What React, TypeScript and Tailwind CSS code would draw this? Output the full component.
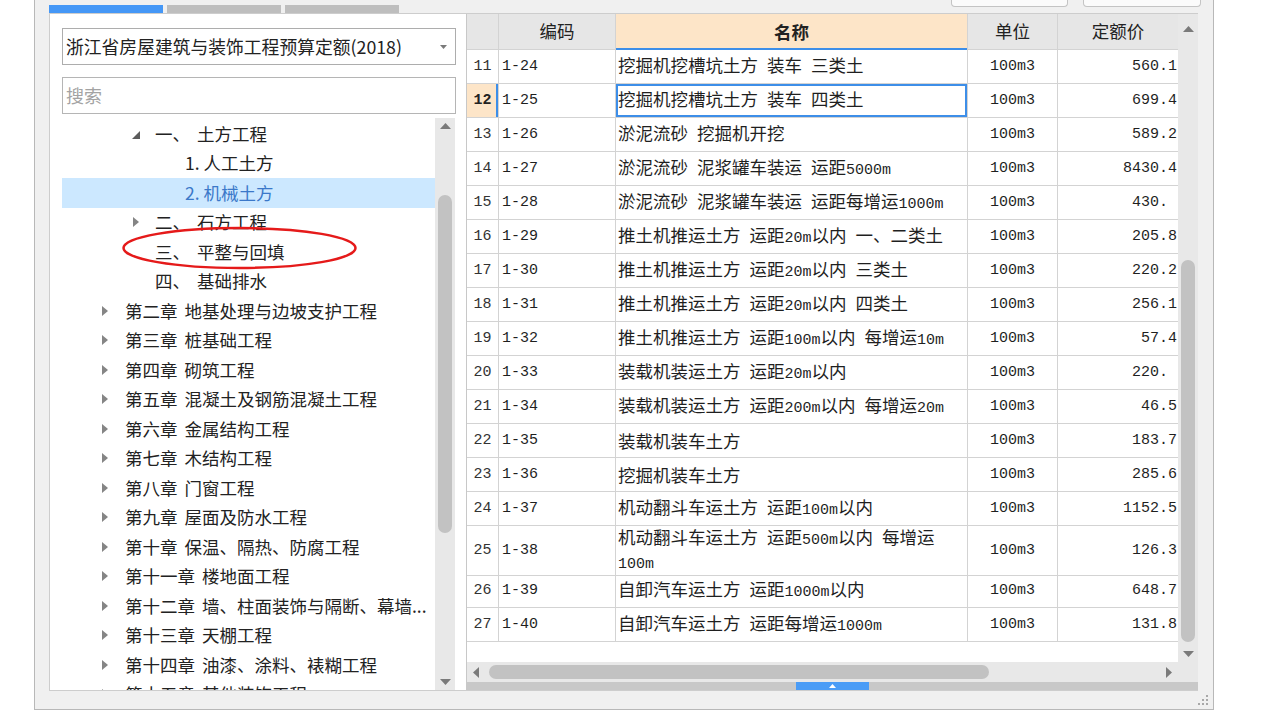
type Row = {
  n: number;
  code: string;
  name: string[];
  price: string;
  active?: boolean;
};

const rows: Row[] = [
  { n: 11, code: "1-24", name: ["挖掘机挖槽坑土方 装车 三类土"], price: "560.1" },
  { n: 12, code: "1-25", name: ["挖掘机挖槽坑土方 装车 四类土"], price: "699.4", active: true },
  { n: 13, code: "1-26", name: ["淤泥流砂 挖掘机开挖"], price: "589.2" },
  { n: 14, code: "1-27", name: ["淤泥流砂 泥浆罐车装运 运距5000m"], price: "8430.4" },
  { n: 15, code: "1-28", name: ["淤泥流砂 泥浆罐车装运 运距每增运1000m"], price: "430. " },
  { n: 16, code: "1-29", name: ["推土机推运土方 运距20m以内 一、二类土"], price: "205.8" },
  { n: 17, code: "1-30", name: ["推土机推运土方 运距20m以内 三类土"], price: "220.2" },
  { n: 18, code: "1-31", name: ["推土机推运土方 运距20m以内 四类土"], price: "256.1" },
  { n: 19, code: "1-32", name: ["推土机推运土方 运距100m以内 每增运10m"], price: "57.4" },
  { n: 20, code: "1-33", name: ["装载机装运土方 运距20m以内"], price: "220. " },
  { n: 21, code: "1-34", name: ["装载机装运土方 运距200m以内 每增运20m"], price: "46.5" },
  { n: 22, code: "1-35", name: ["装载机装车土方"], price: "183.7" },
  { n: 23, code: "1-36", name: ["挖掘机装车土方"], price: "285.6" },
  { n: 24, code: "1-37", name: ["机动翻斗车运土方 运距100m以内"], price: "1152.5" },
  { n: 25, code: "1-38", name: ["机动翻斗车运土方 运距500m以内 每增运", "100m"], price: "126.3" },
  { n: 26, code: "1-39", name: ["自卸汽车运土方 运距1000m以内"], price: "648.7" },
  { n: 27, code: "1-40", name: ["自卸汽车运土方 运距每增运1000m"], price: "131.8" },
];

type TreeNode = {
  level: 1 | 2 | 3;
  label: string;
  sub?: string;
  toggle?: "open" | "closed";
  selected?: boolean;
};

const chapters: [string, string][] = [
  ["第二章", "地基处理与边坡支护工程"],
  ["第三章", "桩基础工程"],
  ["第四章", "砌筑工程"],
  ["第五章", "混凝土及钢筋混凝土工程"],
  ["第六章", "金属结构工程"],
  ["第七章", "木结构工程"],
  ["第八章", "门窗工程"],
  ["第九章", "屋面及防水工程"],
  ["第十章", "保温、隔热、防腐工程"],
  ["第十一章", "楼地面工程"],
  ["第十二章", "墙、柱面装饰与隔断、幕墙..."],
  ["第十三章", "天棚工程"],
  ["第十四章", "油漆、涂料、裱糊工程"],
  ["第十五章", "其他装饰工程"],
];

const tree: TreeNode[] = [
  { level: 2, label: "一、", sub: "土方工程", toggle: "open" },
  { level: 3, label: "1. 人工土方" },
  { level: 3, label: "2. 机械土方", selected: true },
  { level: 2, label: "二、", sub: "石方工程", toggle: "closed" },
  { level: 2, label: "三、", sub: "平整与回填" },
  { level: 2, label: "四、", sub: "基础排水" },
  ...chapters.map(
    ([label, sub]): TreeNode => ({ level: 1, label, sub, toggle: "closed" }),
  ),
];

// ascii runs get the narrow mono face, the rest stays in the CJK face
function Mixed({ text }: { text: string }) {
  const parts = text.split(/([ -~]+)/).filter((p) => p !== "");
  return (
    <>
      {parts.map((part, i) =>
        /^[ -~]+$/.test(part) ? (
          <span
            key={i}
            className="whitespace-pre font-['Liberation_Mono',monospace] text-[15px]"
          >
            {part}
          </span>
        ) : (
          <span key={i}>{part}</span>
        ),
      )}
    </>
  );
}

function Arrow({ dir, color = "#7a7a7a" }: { dir: "up" | "down" | "left" | "right"; color?: string }) {
  if (dir === "up" || dir === "down") {
    return (
      <svg width="11" height="6" viewBox="0 0 11 6">
        <polygon
          points={dir === "up" ? "0,6 5.5,0 11,6" : "0,0 11,0 5.5,6"}
          fill={color}
        />
      </svg>
    );
  }
  return (
    <svg width="6" height="11" viewBox="0 0 6 11">
      <polygon points={dir === "left" ? "6,0 6,11 0,5.5" : "0,0 6,5.5 0,11"} fill={color} />
    </svg>
  );
}

function TreeRow({ node }: { node: TreeNode }) {
  const indent =
    node.level === 1 ? "w-[40px]" : node.level === 2 ? "w-[70px]" : "w-[123px]";
  return (
    <div
      className={`flex h-[29.5px] shrink-0 items-center whitespace-nowrap text-[17.5px] ${
        node.selected ? "bg-[#cce8ff] text-[#3b78c9]" : "text-[#222]"
      }`}
    >
      <div className={`${indent} shrink-0`} />
      {node.level !== 3 && (
        <div className="flex w-[23px] shrink-0 items-center">
          {node.toggle === "open" && (
            <svg width="8" height="8" viewBox="0 0 8 8" className="mt-[3px]">
              <polygon points="8,0 8,8 0,8" fill="#5c5c5c" />
            </svg>
          )}
          {node.toggle === "closed" && (
            <span className={node.level === 2 ? "ml-[1px] flex" : "flex"}>
              <svg width="6" height="10" viewBox="0 0 6 10">
                <polygon points="0,0 6,5 0,10" fill="#858585" />
              </svg>
            </span>
          )}
        </div>
      )}
      <span>{node.label}</span>
      {node.sub && <span className="ml-[7px]">{node.sub}</span>}
    </div>
  );
}

const line = "border-[#d3d3d3]";
const mono = "font-['Liberation_Mono',monospace] text-[15px]";

export default function App() {
  return (
    <div className="relative flex h-[712px] w-[1282px] overflow-hidden bg-white font-['Noto_Sans_CJK_SC',sans-serif] text-[#1f1f1f]">
      <div className="w-[34px] shrink-0" />
      <div className="flex h-[710px] w-[1180px] shrink-0 flex-col border-x border-b border-[#b8b8b8] bg-[#f0f0f0]">
        {/* tab strip */}
        <div className="flex h-[13px] shrink-0 pl-[14px] pr-[12px]">
          <div className="flex gap-[4px] self-end">
            <div className="h-[8px] w-[114px] bg-[#4597f6]" />
            <div className="h-[8px] w-[114px] bg-[#bebebe]" />
            <div className="h-[8px] w-[114px] bg-[#bebebe]" />
          </div>
          <div className="ml-auto flex gap-[15px] self-start">
            <div className="h-[7px] w-[117px] rounded-b-[4px] border-x border-b border-[#c4c4c4] bg-[#fbfbfb]" />
            <div className="h-[7px] w-[118px] rounded-b-[4px] border-x border-b border-[#c4c4c4] bg-[#fbfbfb]" />
          </div>
        </div>

        {/* content */}
        <div className="ml-[14px] flex h-[678px] w-[1149px] shrink-0 border-y border-l border-[#cdcdcd] bg-white">
          {/* left: tree */}
          <div className="flex w-[406px] shrink-0 flex-col pl-[12px]">
            <div className="mt-[14px] flex h-[37px] w-[394px] items-center justify-between border border-[#adadad] pl-[3px] pr-[8px]">
              <span className="whitespace-nowrap text-[17.8px] text-[#222]">
                浙江省房屋建筑与装饰工程预算定额(2018)
              </span>
              <svg width="7" height="4" viewBox="0 0 7 4">
                <polygon points="0,0 7,0 3.5,4" fill="#7a7a7a" />
              </svg>
            </div>
            <div className="mt-[12px] flex h-[37px] w-[394px] items-center border border-[#b5b5b5] pl-[3px]">
              <span className="text-[18px] text-[#a3a3a3]">搜索</span>
            </div>
            <div className="mt-[4px] flex min-h-0 flex-1">
              <div className="flex w-[373px] flex-col overflow-hidden pt-[1px]">
                {tree.map((node, i) => (
                  <TreeRow key={i} node={node} />
                ))}
              </div>
              <div className="flex w-[20px] flex-col items-center bg-[#e8e8e8]">
                <div className="flex h-[16px] items-center">
                  <Arrow dir="up" />
                </div>
                <div className="mt-[61px] h-[338px] w-[14px] rounded-full bg-[#c2c2c2]" />
                <div className="flex-1" />
                <div className="flex h-[16px] items-center">
                  <Arrow dir="down" />
                </div>
              </div>
            </div>
          </div>

          <div className="w-[10px] shrink-0" />

          {/* right: table */}
          <div className="flex w-[732px] shrink-0 flex-col border-l border-[#c8c8c8]">
            <div className="flex h-[648px] shrink-0">
              <div className="flex w-[711px] flex-col overflow-hidden">
                <div className="grid h-[36px] shrink-0 grid-cols-[32px_117px_352px_90px_120px] bg-[#e6e6e6] text-[17.5px] text-[#222]">
                  <div className={`border-r border-b ${line}`} />
                  <div className={`flex items-center justify-center border-r border-b ${line}`}>编码</div>
                  <div className={`flex items-center justify-center border-r ${line} bg-[#fde5c8] font-bold shadow-[inset_0_-2px_0_#3d8ee8]`}>
                    名称
                  </div>
                  <div className={`flex items-center justify-center border-r border-b ${line}`}>单位</div>
                  <div className={`flex items-center justify-center border-b ${line}`}>定额价</div>
                </div>
                {rows.map((r) => (
                  <div
                    key={r.n}
                    className={`grid shrink-0 grid-cols-[32px_117px_352px_90px_120px] ${
                      r.name.length > 1 ? "h-[48px]" : "h-[34px]"
                    }`}
                  >
                    <div
                      className={`flex items-center justify-center border-r border-b ${line} pt-[2px] ${mono} ${
                        r.active
                          ? "bg-[#fde5c8] font-bold text-[#222] shadow-[inset_-2px_0_0_#3d8ee8]"
                          : "text-[#333]"
                      }`}
                    >
                      {r.n}
                    </div>
                    <div className={`flex items-center border-r border-b ${line} pt-[2px] pl-[3px] ${mono}`}>
                      {r.code}
                    </div>
                    <div
                      className={`flex flex-col justify-center border-r border-b ${line} pt-[1px] pl-[2px] text-[17.5px] leading-[20px] whitespace-nowrap ${
                        r.active ? "shadow-[inset_0_0_0_2px_#3d8ee8]" : ""
                      }`}
                    >
                      {r.name.map((t, i) => (
                        <div key={i}>
                          <Mixed text={t} />
                        </div>
                      ))}
                    </div>
                    <div className={`flex items-center justify-center border-r border-b ${line} pt-[2px] ${mono}`}>
                      100m3
                    </div>
                    <div className={`flex items-center justify-end border-b ${line} pt-[2px] pr-[1px] ${mono} whitespace-pre`}>
                      {r.price}
                    </div>
                  </div>
                ))}
              </div>
              <div className="flex w-[20px] flex-col items-center bg-[#e8e8e8]">
                <div className="flex h-[18px] items-end">
                  <Arrow dir="up" />
                </div>
                <div className="mt-[228px] h-[382px] w-[14px] rounded-full bg-[#c2c2c2]" />
                <div className="flex-1" />
                <div className="flex h-[16px] items-center">
                  <Arrow dir="down" />
                </div>
              </div>
            </div>
            <div className="flex h-[20px] shrink-0 bg-[#e8e8e8]">
              <div className="flex w-[711px] items-center">
                <div className="ml-[6px] flex">
                  <Arrow dir="left" />
                </div>
                <div className="ml-[10px] h-[14px] w-[500px] rounded-full bg-[#c2c2c2]" />
                <div className="ml-[177px] flex">
                  <Arrow dir="right" />
                </div>
              </div>
              <div className="w-[20px]" />
            </div>
            <div className="flex h-[8px] shrink-0 bg-[#c8c8c8]">
              <div className="ml-[329px] flex h-[8px] w-[73px] items-center justify-center bg-[#4a9cf6]">
                <svg width="7" height="4" viewBox="0 0 7 4">
                  <polygon points="0,4 3.5,0 7,4" fill="#ffffff" />
                </svg>
              </div>
            </div>
          </div>
        </div>

        {/* bottom strip with resize grip */}
        <div className="flex flex-1 items-center justify-end pr-[4px]">
          <svg width="12" height="12" viewBox="0 0 12 12">
            <rect x="9" y="1" width="2" height="2" fill="#a8a8a8" />
            <rect x="5" y="5" width="2" height="2" fill="#a8a8a8" />
            <rect x="9" y="5" width="2" height="2" fill="#a8a8a8" />
            <rect x="1" y="9" width="2" height="2" fill="#a8a8a8" />
            <rect x="5" y="9" width="2" height="2" fill="#a8a8a8" />
            <rect x="9" y="9" width="2" height="2" fill="#a8a8a8" />
          </svg>
        </div>
      </div>

      {/* red annotation ring */}
      <svg
        className="pointer-events-none absolute left-[121px] top-[226px]"
        width="237"
        height="45"
        viewBox="0 0 237 45"
      >
        <ellipse cx="118.5" cy="22" rx="116" ry="20" fill="none" stroke="#e51a1a" strokeWidth="2.5" />
      </svg>
    </div>
  );
}
